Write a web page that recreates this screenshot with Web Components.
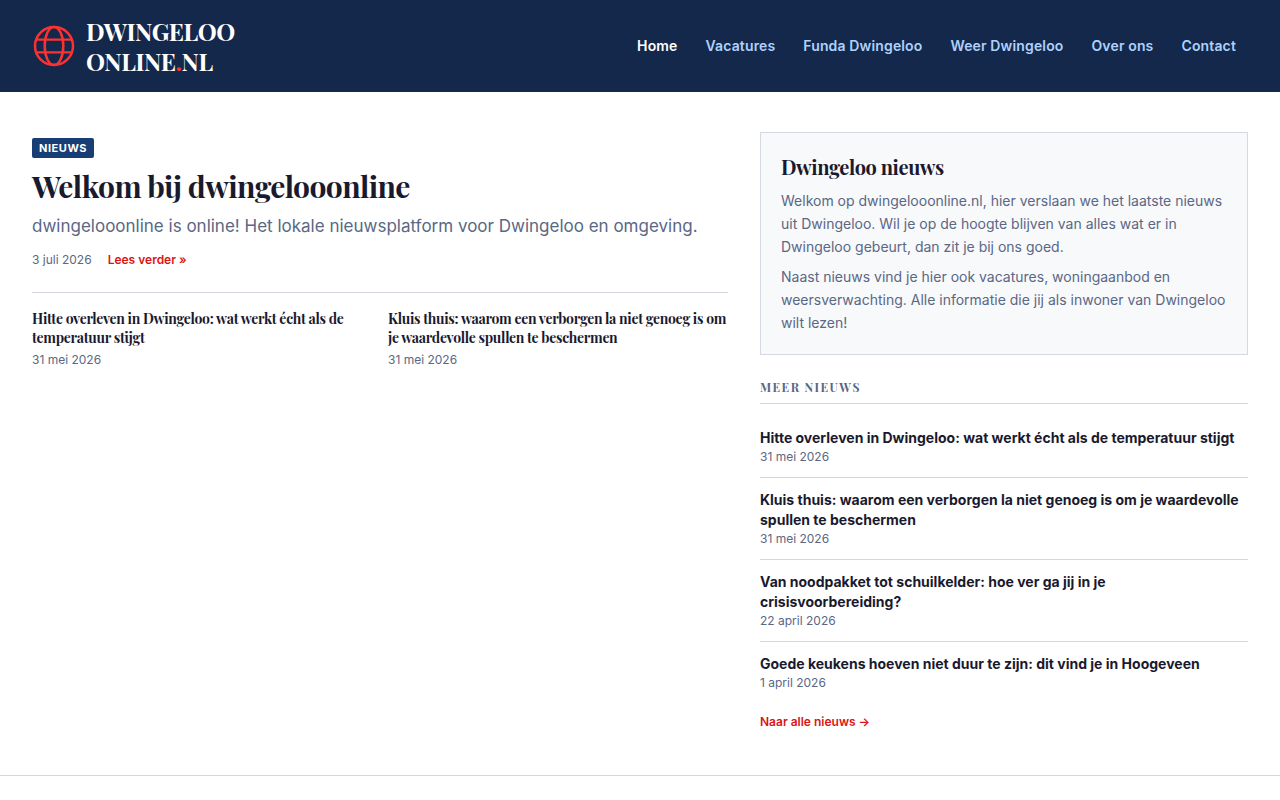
<!DOCTYPE html>
<html lang="nl">
<head>
<meta charset="utf-8">
<meta name="viewport" content="width=device-width, initial-scale=1">
<title>Dwingeloo Online</title>
<style>
:root {
  --navy: #14284b;
  --blue: #173f75;
  --sky: #aed1fc;
  --ink: #1a1a2e;
  --muted: #5a6785;
  --line: #d5d7e3;
  --red: #dc1414;
  --serif: "Playfair Display", "Liberation Serif", serif;
}
body { margin: 0; background: #fff; color: var(--ink); font-family: Inter, "Liberation Sans", sans-serif; }
</style>
</head>
<body>
<news-page>
  <site-header slot="header">
    <nav-link href="#home" current>Home</nav-link>
    <nav-link href="#vacatures">Vacatures</nav-link>
    <nav-link href="#funda">Funda Dwingeloo</nav-link>
    <nav-link href="#weer">Weer Dwingeloo</nav-link>
    <nav-link href="#over">Over ons</nav-link>
    <nav-link href="#contact">Contact</nav-link>
  </site-header>
  <lead-story slot="main" label="Nieuws" date="3 juli 2026" href="#welkom">
    <span slot="title">Welkom bij dwingelooonline</span>
    dwingelooonline is online! Het lokale nieuwsplatform voor Dwingeloo en omgeving.
  </lead-story>
  <story-grid slot="main">
    <story-card href="#hitte" date="31 mei 2026">Hitte overleven in Dwingeloo: wat werkt écht als de temperatuur stijgt</story-card>
    <story-card href="#kluis" date="31 mei 2026">Kluis thuis: waarom een verborgen la niet genoeg is om je waardevolle spullen te beschermen</story-card>
  </story-grid>
  <intro-box slot="aside" heading="Dwingeloo nieuws">
    <text-block>Welkom op dwingelooonline.nl, hier verslaan we het laatste nieuws uit Dwingeloo. Wil je op de hoogte blijven van alles wat er in Dwingeloo gebeurt, dan zit je bij ons goed.</text-block>
    <text-block>Naast nieuws vind je hier ook vacatures, woningaanbod en weersverwachting. Alle informatie die jij als inwoner van Dwingeloo wilt lezen!</text-block>
  </intro-box>
  <news-list slot="aside" heading="Meer nieuws">
    <news-item href="#hitte" date="31 mei 2026">Hitte overleven in Dwingeloo: wat werkt écht als de temperatuur stijgt</news-item>
    <news-item href="#kluis" date="31 mei 2026">Kluis thuis: waarom een verborgen la niet genoeg is om je waardevolle spullen te beschermen</news-item>
    <news-item href="#noodpakket" date="22 april 2026">Van noodpakket tot schuilkelder: hoe ver ga jij in je crisisvoorbereiding?</news-item>
    <news-item href="#keukens" date="1 april 2026">Goede keukens hoeven niet duur te zijn: dit vind je in Hoogeveen</news-item>
  </news-list>
</news-page>
<script>
function define(name, markup, fill) {
  const template = document.createElement('template');
  template.innerHTML = markup;
  customElements.define(name, class extends HTMLElement {
    constructor() {
      super();
      this.attachShadow({ mode: 'open' }).append(template.content.cloneNode(true));
    }
    connectedCallback() {
      if (fill) fill(this, selector => this.shadowRoot.querySelector(selector));
    }
  });
}

define('news-page', `
<style>
:host { display: block; }
.columns { display: grid; grid-template-columns: repeat(12, minmax(0, 1fr)); gap: 32px; padding: 40px 32px; }
main { grid-column: span 7; }
aside { grid-column: span 5; display: grid; gap: 24px; align-content: start; }
footer { border-top: 1px solid var(--line); }
@media (max-width: 800px) { main, aside { grid-column: 1 / -1; } }
</style>
<slot name="header"></slot>
<div class="columns"><main><slot name="main"></slot></main><aside><slot name="aside"></slot></aside></div>
<footer></footer>`);

define('globe-icon', `
<style>:host { display: block; } svg { display: block; }</style>
<svg width="44" height="44" viewBox="0 0 44 44" fill="none" stroke="#fb3232" aria-hidden="true">
  <circle cx="22" cy="22" r="19" stroke-width="2.5"/>
  <ellipse cx="22" cy="22" rx="9.3" ry="19" stroke-width="2.5"/>
  <path d="M4.2 15.6h35.6M4.2 28.4h35.6" stroke-width="2.4"/>
</svg>`);

define('site-header', `
<style>
:host { display: block; background: var(--navy); }
header { display: flex; align-items: center; justify-content: space-between; gap: 32px; padding: 16px 32px; flex-wrap: wrap; }
.logo { display: flex; align-items: center; gap: 10px; color: #fff; text-decoration: none; font: 700 24px/30px var(--serif); text-transform: uppercase; letter-spacing: -0.02em; }
.dot { color: #fb3232; }
nav { display: flex; flex-wrap: wrap; gap: 4px; }
</style>
<header>
  <a class="logo" href="#home"><globe-icon></globe-icon><span>Dwingeloo<br>Online<span class="dot">.</span>nl</span></a>
  <nav aria-label="Hoofdmenu"><slot></slot></nav>
</header>`);

define('nav-link', `
<style>
:host { display: block; }
a { display: block; padding: 8px 12px; font-size: 14px; line-height: 20px; font-weight: 600; letter-spacing: 0.01em; color: var(--sky); text-decoration: none; }
:host([current]) a { color: #fff; }
</style>
<a><slot></slot></a>`, (el, q) => { q('a').href = el.getAttribute('href'); });

define('lead-story', `
<style>
:host { display: block; padding: 6px 0 24px; border-bottom: 1px solid var(--line); }
.label { display: table; padding: 0 7px; border-radius: 2px; background: var(--blue); color: #fff; font-size: 11px; line-height: 20px; font-weight: 700; letter-spacing: 0.05em; text-transform: uppercase; }
h1 { margin: 8px 0; font: 700 30px/40px var(--serif); letter-spacing: -0.02em; }
h1 a { color: inherit; text-decoration: none; }
p { margin: 0 0 14px; font-size: 17px; line-height: 24px; color: var(--muted); }
.meta { display: flex; gap: 16px; font-size: 12px; line-height: 16px; color: var(--muted); }
.more { color: var(--red); font-weight: 600; text-decoration: none; }
</style>
<article>
  <span class="label"></span>
  <h1><a class="title"><slot name="title"></slot></a></h1>
  <p><slot></slot></p>
  <div class="meta"><time></time><a class="more">Lees verder »</a></div>
</article>`, (el, q) => {
  q('.label').textContent = el.getAttribute('label');
  q('time').textContent = el.getAttribute('date');
  q('.title').href = q('.more').href = el.getAttribute('href');
});

define('story-grid', `
<style>:host { display: grid; grid-template-columns: repeat(auto-fit, minmax(240px, 1fr)); gap: 16px; padding-top: 16px; }</style>
<slot></slot>`);

define('story-card', `
<style>
:host { display: block; }
h2 { margin: 0 0 4px; font: 700 14px/19px var(--serif); letter-spacing: -0.02em; }
a { color: inherit; text-decoration: none; }
time { display: block; font-size: 12px; line-height: 18px; color: var(--muted); }
</style>
<article><h2><a><slot></slot></a></h2><time></time></article>`, (el, q) => {
  q('a').href = el.getAttribute('href');
  q('time').textContent = el.getAttribute('date');
});

define('intro-box', `
<style>
:host { display: block; padding: 20px; border: 1px solid var(--line); background: #f8f9fb; }
h2 { margin: 0 0 8px; font: 700 20px/28px var(--serif); letter-spacing: -0.02em; }
.body { display: grid; gap: 7px; }
</style>
<section><h2></h2><div class="body"><slot></slot></div></section>`, (el, q) => {
  q('h2').textContent = el.getAttribute('heading');
});

define('text-block', `
<style>
:host { display: block; }
p { margin: 0; font-size: 14px; line-height: 23px; color: var(--muted); }
</style>
<p><slot></slot></p>`);

define('news-list', `
<style>
:host { display: block; }
h2 { margin: 0 0 12px; padding-bottom: 8px; border-bottom: 1px solid var(--line); font: 700 12px/16px var(--serif); letter-spacing: 0.12em; text-transform: uppercase; color: var(--muted); }
.all { display: block; padding: 10px 0 4px; font-size: 12px; line-height: 18px; font-weight: 600; color: var(--red); text-decoration: none; }
</style>
<section><h2></h2><slot></slot><a class="all" href="#nieuws">Naar alle nieuws →</a></section>`, (el, q) => {
  q('h2').textContent = el.getAttribute('heading');
});

define('news-item', `
<style>
:host { display: block; padding: 12px 0; border-bottom: 1px solid var(--line); }
:host(:last-of-type) { border-bottom: 0; }
h3 { margin: 0; font-size: 14px; line-height: 20px; font-weight: 700; }
a { color: inherit; text-decoration: none; }
time { display: block; font-size: 12px; line-height: 17px; color: var(--muted); }
</style>
<article><h3><a><slot></slot></a></h3><time></time></article>`, (el, q) => {
  q('a').href = el.getAttribute('href');
  q('time').textContent = el.getAttribute('date');
});
</script>
</body>
</html>
